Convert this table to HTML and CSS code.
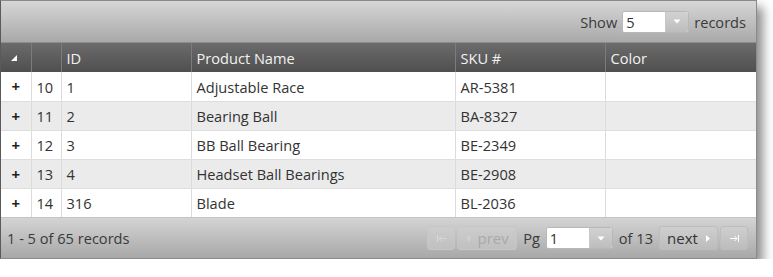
FILE: index.html
```html
<!DOCTYPE html>
<html>
<head>
<meta charset="utf-8">
<link rel="stylesheet" href="styles.css">
</head>
<body>
<div class="grid">
  <div class="toolbar">
    <span class="lbl">Show</span>
    <div class="combo small"><span class="val">5</span><span class="drop"><svg width="8" height="5" viewBox="0 0 8 5"><path d="M0.5 0.5 L7.5 0.5 L4 4.5 Z" fill="#fff"/></svg></span></div>
    <span class="lbl">records</span>
  </div>
  <table class="tbl">
    <colgroup>
      <col class="c-exp"><col class="c-num"><col class="c-id"><col class="c-name"><col class="c-sku"><col class="c-color">
    </colgroup>
    <thead>
      <tr>
        <th class="exp"><svg width="6" height="6" viewBox="0 0 6 6"><path d="M6 0 L6 6 L0 6 Z" fill="#fff"/></svg></th>
        <th></th><th>ID</th><th>Product Name</th><th>SKU #</th><th>Color</th>
      </tr>
    </thead>
    <tbody>
      <tr><td class="exp">+</td><td>10</td><td>1</td><td>Adjustable Race</td><td>AR-5381</td><td></td></tr>
      <tr class="alt"><td class="exp">+</td><td>11</td><td>2</td><td>Bearing Ball</td><td>BA-8327</td><td></td></tr>
      <tr><td class="exp">+</td><td>12</td><td>3</td><td>BB Ball Bearing</td><td>BE-2349</td><td></td></tr>
      <tr class="alt"><td class="exp">+</td><td>13</td><td>4</td><td>Headset Ball Bearings</td><td>BE-2908</td><td></td></tr>
      <tr><td class="exp">+</td><td>14</td><td>316</td><td>Blade</td><td>BL-2036</td><td></td></tr>
    </tbody>
  </table>
  <div class="footer">
    <span class="summary">1 - 5 of 65 records</span>
    <div class="pager">
      <span class="btn icon disabled"><svg width="9" height="7" viewBox="0 0 9 7"><path d="M0.5 0 V7" stroke="#d8d8d8" stroke-width="1"/><path d="M2 3.5 H9 M2 3.5 L4.5 1 M2 3.5 L4.5 6" stroke="#d8d8d8" stroke-width="1" fill="none"/></svg></span>
      <span class="btn prev disabled"><svg width="4" height="7" viewBox="0 0 4 7"><path d="M4 0 L4 7 L0 3.5 Z" fill="#d0d0d0"/></svg>prev</span>
      <span class="lbl">Pg</span>
      <div class="combo page"><span class="val">1</span><span class="drop"><svg width="8" height="5" viewBox="0 0 8 5"><path d="M0.5 0.5 L7.5 0.5 L4 4.5 Z" fill="#fff"/></svg></span></div>
      <span class="lbl">of 13</span>
      <span class="btn next">next<svg width="4" height="7" viewBox="0 0 4 7"><path d="M0 0 L0 7 L4 3.5 Z" fill="#fff"/></svg></span>
      <span class="btn icon"><svg width="9" height="7" viewBox="0 0 9 7"><path d="M8.5 0 V7" stroke="#fff" stroke-width="1"/><path d="M0 3.5 H7 M7 3.5 L4.5 1 M7 3.5 L4.5 6" stroke="#fff" stroke-width="1" fill="none"/></svg></span>
    </div>
  </div>
</div>
</body>
</html>
```
FILE: styles.css
```css
* { box-sizing: border-box; }
html, body { margin: 0; padding: 0; background: #fff; }
body { font-family: "Open Sans", "Noto Sans", sans-serif; font-size: 14.6px; color: #333; }

.grid {
  width: 757px;
  height: 259px;
  border: 1px solid #8a8a8a;
  border-left-color: #5a5a5a;
  box-shadow: 6px 7px 10px rgba(0,0,0,0.45);
  background: #fff;
  display: flex;
  flex-direction: column;
}

.toolbar {
  height: 42px;
  flex: none;
  background: linear-gradient(#d6d6d6, #a9a9a9);
  display: flex;
  align-items: center;
  justify-content: flex-end;
  gap: 5px;
  padding-right: 10px;
  border-bottom: 1px solid #8e8e8e;
}
.lbl { color: #3a3a3a; }

.combo {
  display: flex;
  height: 22px;
  border: 1px solid #b8b8b8;
  border-radius: 3px;
  background: #fff;
  overflow: hidden;
}
.combo .val {
  flex: 1;
  background: #fff;
  padding-left: 3px;
  line-height: 20px;
  color: #333;
}
.combo .drop {
  width: 23px;
  background: linear-gradient(#d2d2d2, #bdbdbd);
  border-left: 1px solid #c8c8c8;
  display: flex;
  align-items: center;
  justify-content: center;
}
.combo.small { width: 67px; }
.combo.page { width: 67px; }

.tbl {
  border-collapse: collapse;
  table-layout: fixed;
  width: 755px;
  flex: none;
}
.c-exp { width: 30px; }
.c-num { width: 30px; }
.c-id { width: 130px; }
.c-name { width: 264px; }
.c-sku { width: 150px; }
.c-color { width: 151px; }

.tbl th {
  height: 29px;
  background: linear-gradient(#6b6b6b, #4f4f4f);
  color: #f2f2f2;
  font-weight: normal;
  text-align: left;
  padding: 1px 5px 0;
  border-left: 1px solid #7c7c7c;
}
.tbl th:first-child { border-left: none; }
.tbl th.exp { text-align: center; padding: 0; }
.tbl th.exp svg { display: block; margin: 1px 0 0 10px; }

.tbl td {
  height: 29px;
  padding: 1px 5px 0;
  border-left: 1px solid #dcdcdc;
  border-bottom: 1px solid #dedede;
  white-space: nowrap;
}
.tbl td:first-child { border-left: none; }
.tbl td.exp { text-align: center; font-weight: bold; padding: 0; font-size: 15px; color: #222; }
.tbl tr.alt td { background: #ebebeb; }
.tbl tbody tr:last-child td { border-bottom: none; }

.footer {
  flex: 1;
  background: linear-gradient(#d4d4d4, #a8a8a8);
  display: flex;
  align-items: center;
  justify-content: space-between;
  padding: 0 8px 0 6px;
  border-top: 1px solid #c4c4c4;
}
.summary { color: #3a3a3a; }

.pager { display: flex; align-items: center; gap: 2px; }
.pager .lbl { margin: 0 4px; }
.btn {
  height: 24px;
  border: 1px solid #bdbdbd;
  border-radius: 3px;
  background: linear-gradient(#cfcfcf, #bcbcbc);
  display: flex;
  align-items: center;
  justify-content: center;
  gap: 8px;
  color: #333;
  font-size: 15px;
}
.btn.disabled { color: #a9a9a9; border-color: #c6c6c6; background: linear-gradient(#cdcdcd, #c0c0c0); }
.btn.icon { width: 28px; }
.btn.prev { width: 60px; }
.btn.next { width: 59px; }
```
